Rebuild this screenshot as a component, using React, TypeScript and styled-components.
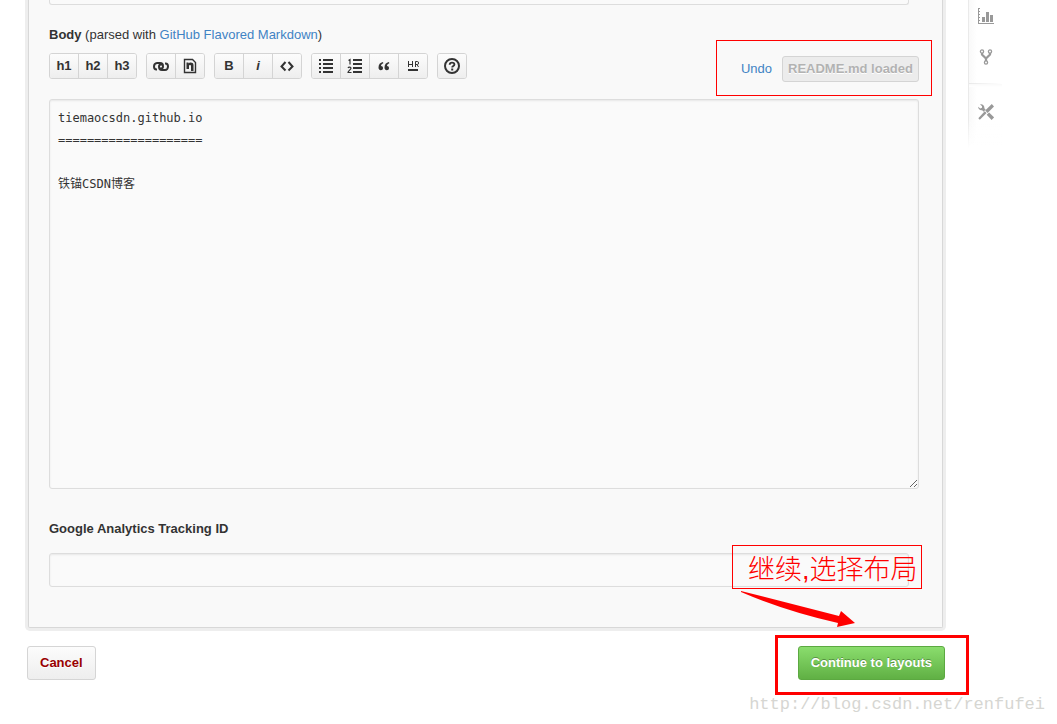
import React from "react";
import styled, { createGlobalStyle, css } from "styled-components";

const GlobalStyle = createGlobalStyle`
  * { box-sizing: border-box; }
  body {
    margin: 0;
    background: #fff;
    color: #333;
    font-family: "Liberation Sans", Arial, "Noto Sans CJK SC", sans-serif;
    font-size: 13px;
    line-height: 20px;
  }
  button, input, textarea { font: inherit; margin: 0; }
`;

const Page = styled.div`
  display: grid;
  grid-template-columns: minmax(0, 1fr) 89px;
  column-gap: 23px;
  align-items: start;
  padding-left: 25px;
`;

const Main = styled.form`
  position: relative;
  min-width: 0;
`;

const Panel = styled.section`
  margin: 0 2px 3px 3px;
  padding: 0 23px 40px 20px;
  background: #f9f9f9;
  border: 1px solid #d8d8d8;
  border-top: 0;
  border-radius: 0 0 2px 2px;
  box-shadow: 0 0 0 3px #eee;
`;

const fieldLook = css`
  display: block;
  background: #fafafa;
  border: 1px solid #ddd;
  border-radius: 3px;
  box-shadow: inset 0 1px 2px rgba(0, 0, 0, 0.075);
  color: #333;
  outline: none;
`;

const TextField = styled.input<{ $tail?: boolean }>`
  ${fieldLook}
  width: calc(100% - 10px);
  height: 34px;
  padding: 7px 8px;
  ${(p) =>
    p.$tail &&
    css`
      height: 5px;
      padding: 0 8px;
      border-top: 0;
      border-radius: 0 0 3px 3px;
      box-shadow: none;
    `}
`;

const BodyField = styled.textarea`
  ${fieldLook}
  width: 100%;
  height: 390px;
  padding: 7px 8px;
  font-family: "DejaVu Sans Mono", "Noto Sans CJK SC", monospace;
  font-size: 12px;
  line-height: 22px;
`;

const Caption = styled.div`
  padding: 20px 0 8px;
`;

const FieldLabel = styled.label<{ $block?: boolean }>`
  font-weight: bold;
  ${(p) => p.$block && "display: block; padding: 30px 0 14px;"}
`;

const Link = styled.a`
  color: #4183c4;
  text-decoration: none;
`;

const Toolbar = styled.div`
  display: flex;
  align-items: flex-start;
  gap: 9px;
  height: 46px;
`;

const ButtonGroup = styled.div`
  display: flex;
  border: 1px solid #d4d4d4;
  border-radius: 3px;
  overflow: hidden;
`;

const ToolButton = styled.button<{ $italic?: boolean }>`
  display: flex;
  align-items: center;
  justify-content: center;
  width: 28px;
  height: 24px;
  padding: 0;
  border: 0;
  background: linear-gradient(#fcfcfc, #eee);
  color: #333;
  font-weight: bold;
  font-style: ${(p) => (p.$italic ? "italic" : "normal")};

  & + & {
    width: 29px;
    border-left: 1px solid #d4d4d4;
  }
`;

const LoadStatus = styled.div`
  position: relative;
  display: flex;
  align-items: center;
  gap: 10px;
  margin: 3px 0 0 auto;
`;

const LoadedButton = styled.button`
  height: 26px;
  padding: 0 5px;
  border: 1px solid #d4d4d4;
  border-radius: 3px;
  background: #ececec;
  color: #b2b2b2;
  font-weight: bold;
  text-shadow: 0 1px 0 #fff;
  white-space: nowrap;
`;

const Actions = styled.div`
  display: flex;
  justify-content: space-between;
  padding: 15px 0 0 2px;
`;

const ActionButton = styled.button<{ $primary?: boolean }>`
  height: 34px;
  padding: 0 12px;
  border: 1px solid ${(p) => (p.$primary ? "#5ca941" : "#d5d5d5")};
  border-radius: 3px;
  background: ${(p) =>
    p.$primary ? "linear-gradient(#8add6d, #60b044)" : "linear-gradient(#fcfcfc, #eee)"};
  color: ${(p) => (p.$primary ? "#fff" : "#900")};
  font-weight: bold;
  text-shadow: ${(p) =>
    p.$primary ? "0 -1px 0 rgba(0, 0, 0, 0.3)" : "0 1px 0 rgba(255, 255, 255, 0.9)"};
  white-space: nowrap;
`;

const PrimarySlot = styled.div`
  position: relative;
`;

const Highlight = styled.span<{ $thick?: boolean }>`
  position: absolute;
  inset: ${(p) => (p.$thick ? "-11px -24px -15px -23px" : "-16px -13px -14px -25px")};
  border: ${(p) => (p.$thick ? 3 : 1)}px solid #f00;
  pointer-events: none;
`;

const Note = styled.div`
  position: absolute;
  right: 23px;
  bottom: 91px;
  width: 190px;
  height: 44px;
  padding: 3px 0 0 15px;
  border: 1px solid #f00;
  color: #f00;
  font-family: "Liberation Sans", "Noto Sans CJK SC", sans-serif;
  font-size: 27px;
  font-weight: 300;
  line-height: 42px;
  white-space: nowrap;
  pointer-events: none;
`;

const Arrow = styled.svg`
  position: absolute;
  right: 89px;
  bottom: 51px;
  pointer-events: none;
`;

const Watermark = styled.div`
  grid-column: 1 / -1;
  padding: 13px 12px 0 0;
  color: #d6d6d2;
  font-family: "Liberation Mono", monospace;
  font-size: 17px;
  line-height: 24px;
  text-align: right;
`;

const SideNav = styled.nav`
  display: flex;
  flex-direction: column;
  width: 34px;
  height: 148px;
  border-left: 1px solid;
  border-image: linear-gradient(#eaeaea 80%, #fff) 1;
  background:
    linear-gradient(transparent 80%, #fff),
    linear-gradient(90deg, #f9f9f9, #fff 8px);
`;

const NavLink = styled.a`
  display: flex;
  padding: 8px 0 17px 9px;
  color: #999;
  line-height: 0;
`;

const NavRule = styled.hr`
  width: 100%;
  height: 4px;
  margin: 1px 0 9px;
  border: 0;
  background:
    linear-gradient(90deg, #e8e8e8, #fff) top / 100% 1px no-repeat,
    linear-gradient(#f7f7f7, #fff);
`;

const Icon = ({ children, size = 16 }: { children: React.ReactNode; size?: number }) => (
  <svg width={size} height={size} viewBox={`0 0 ${size} ${size}`} fill="currentColor" aria-hidden="true">
    {children}
  </svg>
);

const LinkIcon = () => (
  <Icon>
    <g fill="none" stroke="currentColor" strokeWidth="2">
      <path d="M4 11.5H3.5C1.8 11.5 1 10 1 8.500S2 5 4 5h3c2 0 3 1.500 3 3.200 0 1.300-.8 2.300-2 2.300H7" />
      <path d="M12 5.500h.5c1.700 0 2.500 1.500 2.500 3S14 12 12 12H9c-2 0-3-1.500-3-3.200C6 7.500 6.800 6.500 8 6.500h1" />
    </g>
  </Icon>
);

const ImageIcon = () => (
  <Icon>
    <path d="M2.500 1.500h8l3 3v10h-11z" fill="none" stroke="currentColor" strokeWidth="1.400" />
    <path d="M4.500 4.500h2v1c1-1.300 5-1.500 5 1.500v6H9V8c0-1.500-2-1.500-2 0v3H4.500z" />
  </Icon>
);

const CodeIcon = () => (
  <Icon>
    <path d="M6.500 4 2.500 8.500l4 4M9.500 4l4 4.500-4 4" fill="none" stroke="currentColor" strokeWidth="2" />
  </Icon>
);

const BulletIcon = () => (
  <Icon>
    <path d="M1 1h2v2H1zM1 5h2v2H1zM1 9h2v2H1zM1 13h2v2H1zM5 1h10v2H5zM5 5h10v2H5zM5 9h10v2H5zM5 13h10v2H5z" />
  </Icon>
);

const NumberIcon = () => (
  <Icon>
    <path d="M6 1h9v2H6zM6 5h9v2H6zM6 9h9v2H6zM6 13h9v2H6z" />
    <path d="M1.500 2.500 3 1.500v5M1 10c.5-1.200 3-1.200 3 .3 0 1.200-3 2.700-3 4.200h3.500" fill="none" stroke="currentColor" strokeWidth="1.200" />
  </Icon>
);

const QuoteIcon = () => (
  <Icon>
    <path d="M7 4C4 4.500 2.500 6.500 2.500 9.500c0 1.800 1 2.800 2.300 2.800S7 11.300 7 10 6.200 7.900 5 7.900C5.200 6.600 6 5.700 7.300 5.300zM13 4c-3 .5-4.500 2.500-4.500 5.500 0 1.800 1 2.800 2.300 2.800S13 11.300 13 10s-.8-2.100-2-2.100c.2-1.300 1-2.200 2.300-2.600z" />
  </Icon>
);

const RuleIcon = () => (
  <Icon>
    <path d="M3.500 3v6M7.500 3v6M3.500 6.500h4M10.500 9V3.500h2q1 0 1 1.500t-1 1.500h-2M12 6.500 13.500 9" fill="none" stroke="currentColor" />
    <path d="M3 11h10v2H3z" />
  </Icon>
);

const HelpIcon = () => (
  <Icon>
    <circle cx="8" cy="8" r="7" fill="none" stroke="currentColor" strokeWidth="2" />
    <path d="M5.700 6.800C5.700 3.800 10.400 4 10.400 6.500 10.400 8 8.200 8 8.200 9.500" fill="none" stroke="currentColor" strokeWidth="1.900" />
    <path d="M7.200 10.500h2v2h-2z" />
  </Icon>
);

const GraphIcon = () => (
  <Icon>
    <path d="M0 0h2v1H1v2h1v1H1v2h1v1H1v2h1v1H1v2h1v1H1v2h15v1H0zM4 9h3v5H4zM8 4h3v10H8zM12 7h3v7h-3z" />
  </Icon>
);

const ForkIcon = () => (
  <Icon>
    <g fill="none" stroke="currentColor">
      <circle cx="4" cy="2.500" r="1.600" strokeWidth="1.300" />
      <circle cx="12" cy="2.500" r="1.600" strokeWidth="1.300" />
      <circle cx="8" cy="13.500" r="1.600" strokeWidth="1.300" />
      <path d="M4 4v1.500L8 9.500l4-4V4M8 8.500V12" strokeWidth="2.200" />
    </g>
  </Icon>
);

const ToolsIcon = () => (
  <Icon>
    <path d="M13.800 0 7.200 6.600 9.600 9 16 2.500zM6.700 7.200.3 14.200l1.500 1.500L8.600 9z" />
    <path d="m8.700 10.800 2.400-2.400 5 5-2.500 2.500zM2 .3C4.500-.4 6.800 1.500 6.300 4.200L7.700 5.600 5.600 7.700 4.200 6.200C2 6.700 0 5 .2 2.700L2.200 4.500 4 3.800V2.300z" />
  </Icon>
);

const toolGroups = [
  [
    { name: "Heading 1", face: "h1" },
    { name: "Heading 2", face: "h2" },
    { name: "Heading 3", face: "h3" },
  ],
  [
    { name: "Link", face: <LinkIcon /> },
    { name: "Image", face: <ImageIcon /> },
  ],
  [
    { name: "Bold", face: "B" },
    { name: "Italic", face: "i", italic: true },
    { name: "Code", face: <CodeIcon /> },
  ],
  [
    { name: "Bulleted list", face: <BulletIcon /> },
    { name: "Numbered list", face: <NumberIcon /> },
    { name: "Quote", face: <QuoteIcon /> },
    { name: "Horizontal rule", face: <RuleIcon /> },
  ],
  [{ name: "Help", face: <HelpIcon /> }],
] as { name: string; face: React.ReactNode; italic?: boolean }[][];

export default function App() {
  return (
    <>
      <GlobalStyle />
      <Page>
        <Main onSubmit={(e) => e.preventDefault()}>
          <Panel>
            <TextField $tail aria-label="Tagline" />
            <Caption>
              <FieldLabel htmlFor="body">Body</FieldLabel> (parsed with{" "}
              <Link href="#markdown">GitHub Flavored Markdown</Link>)
            </Caption>
            <Toolbar>
              {toolGroups.map((group, i) => (
                <ButtonGroup key={i}>
                  {group.map((tool) => (
                    <ToolButton key={tool.name} type="button" aria-label={tool.name} $italic={tool.italic}>
                      {tool.face}
                    </ToolButton>
                  ))}
                </ButtonGroup>
              ))}
              <LoadStatus>
                <Link href="#undo">Undo</Link>
                <LoadedButton type="button" disabled>
                  README.md loaded
                </LoadedButton>
                <Highlight />
              </LoadStatus>
            </Toolbar>
            <BodyField
              id="body"
              spellCheck={false}
              defaultValue={"tiemaocsdn.github.io\n====================\n\n铁锚CSDN博客"}
            />
            <FieldLabel htmlFor="tracking" $block>
              Google Analytics Tracking ID
            </FieldLabel>
            <TextField id="tracking" />
          </Panel>
          <Actions>
            <ActionButton type="button">Cancel</ActionButton>
            <PrimarySlot>
              <ActionButton type="submit" $primary>
                Continue to layouts
              </ActionButton>
              <Highlight $thick />
            </PrimarySlot>
          </Actions>
          <Note>继续,选择布局</Note>
          <Arrow width="116" height="38" viewBox="0 0 116 38" fill="#f00" aria-hidden="true">
            <path d="M1 0 99 25 101 20 115 32 97 36 98 32Q45 20 1 1z" />
          </Arrow>
        </Main>
        <SideNav aria-label="Repository">
          <NavLink href="#graphs" aria-label="Graphs">
            <GraphIcon />
          </NavLink>
          <NavLink href="#network" aria-label="Network">
            <ForkIcon />
          </NavLink>
          <NavRule />
          <NavLink href="#settings" aria-label="Settings">
            <ToolsIcon />
          </NavLink>
        </SideNav>
        <Watermark>http://blog.csdn.net/renfufei</Watermark>
      </Page>
    </>
  );
}
